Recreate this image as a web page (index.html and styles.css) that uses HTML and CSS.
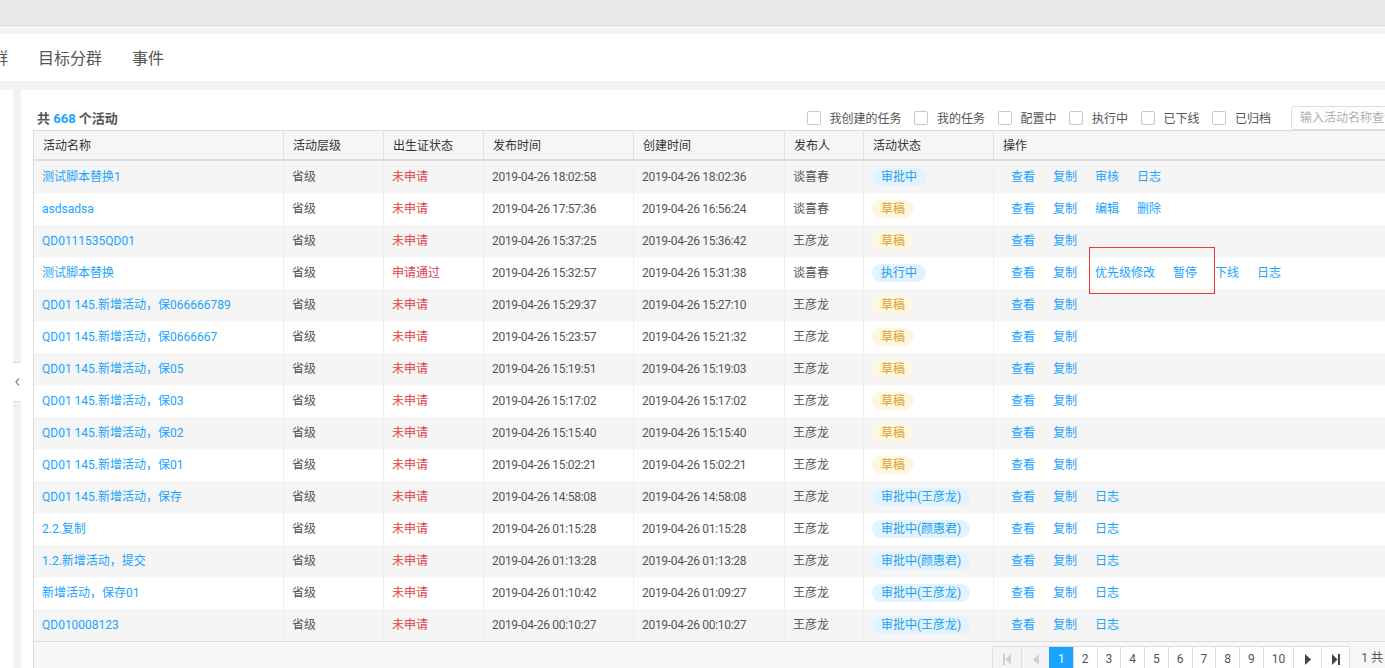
FILE: index.html
```html
<!DOCTYPE html>
<html lang="zh-CN">
<head>
<meta charset="utf-8">
<title>活动列表</title>
<link rel="stylesheet" href="styles.css">
</head>
<body>
<div class="topbar"></div>
<div class="band"></div>
<nav class="nav">
  <span class="nav-item cut">用户分群</span>
  <span class="nav-item">目标分群</span>
  <span class="nav-item">事件</span>
</nav>
<div class="band band-b"></div>
<div class="main">
  <div class="side"></div>
  <div class="rail">
    <div class="rail-top"></div>
    <div class="rail-toggle">
      <svg width="5" height="8" viewBox="0 0 5 8"><polyline points="4,0.5 1,4 4,7.5" fill="none" stroke="#7a8ea8" stroke-width="1.3"/></svg>
    </div>
    <div class="rail-bottom"></div>
  </div>
  <div class="panel">
    <div class="toolbar">
      <div class="title">共 <span class="count">668</span> 个活动</div>
      <div class="filters">
        <label class="check"><span class="box"></span><span class="lbl">我创建的任务</span></label>
        <label class="check"><span class="box"></span><span class="lbl">我的任务</span></label>
        <label class="check"><span class="box"></span><span class="lbl">配置中</span></label>
        <label class="check"><span class="box"></span><span class="lbl">执行中</span></label>
        <label class="check"><span class="box"></span><span class="lbl">已下线</span></label>
        <label class="check"><span class="box"></span><span class="lbl">已归档</span></label>
      </div>
      <input class="search" type="text" placeholder="输入活动名称查询">
    </div>
    <div class="grid">
      <div class="row head">
        <div>活动名称</div><div>活动层级</div><div>出生证状态</div><div>发布时间</div><div>创建时间</div><div>发布人</div><div>活动状态</div><div>操作</div>
      </div>
      <div class="body">
        <div class="row"><div><a>测试脚本替换1</a></div><div>省级</div><div class="red">未申请</div><div class="date">2019-04-26 18:02:58</div><div class="date">2019-04-26 18:02:36</div><div>谈喜春</div><div><span class="tag blue">审批中</span></div><div class="ops"><a>查看</a><a>复制</a><a>审核</a><a>日志</a></div></div>
        <div class="row"><div><a>asdsadsa</a></div><div>省级</div><div class="red">未申请</div><div class="date">2019-04-26 17:57:36</div><div class="date">2019-04-26 16:56:24</div><div>谈喜春</div><div><span class="tag yellow">草稿</span></div><div class="ops"><a>查看</a><a>复制</a><a>编辑</a><a>删除</a></div></div>
        <div class="row"><div><a>QD0111535QD01</a></div><div>省级</div><div class="red">未申请</div><div class="date">2019-04-26 15:37:25</div><div class="date">2019-04-26 15:36:42</div><div>王彦龙</div><div><span class="tag yellow">草稿</span></div><div class="ops"><a>查看</a><a>复制</a></div></div>
        <div class="row"><div><a>测试脚本替换</a></div><div>省级</div><div class="red">申请通过</div><div class="date">2019-04-26 15:32:57</div><div class="date">2019-04-26 15:31:38</div><div>谈喜春</div><div><span class="tag blue">执行中</span></div><div class="ops marked"><a>查看</a><a>复制</a><a>优先级修改</a><a>暂停</a><a>下线</a><a>日志</a><span class="mark"></span></div></div>
        <div class="row"><div><a>QD01 145.新增活动，保066666789</a></div><div>省级</div><div class="red">未申请</div><div class="date">2019-04-26 15:29:37</div><div class="date">2019-04-26 15:27:10</div><div>王彦龙</div><div><span class="tag yellow">草稿</span></div><div class="ops"><a>查看</a><a>复制</a></div></div>
        <div class="row"><div><a>QD01 145.新增活动，保0666667</a></div><div>省级</div><div class="red">未申请</div><div class="date">2019-04-26 15:23:57</div><div class="date">2019-04-26 15:21:32</div><div>王彦龙</div><div><span class="tag yellow">草稿</span></div><div class="ops"><a>查看</a><a>复制</a></div></div>
        <div class="row"><div><a>QD01 145.新增活动，保05</a></div><div>省级</div><div class="red">未申请</div><div class="date">2019-04-26 15:19:51</div><div class="date">2019-04-26 15:19:03</div><div>王彦龙</div><div><span class="tag yellow">草稿</span></div><div class="ops"><a>查看</a><a>复制</a></div></div>
        <div class="row"><div><a>QD01 145.新增活动，保03</a></div><div>省级</div><div class="red">未申请</div><div class="date">2019-04-26 15:17:02</div><div class="date">2019-04-26 15:17:02</div><div>王彦龙</div><div><span class="tag yellow">草稿</span></div><div class="ops"><a>查看</a><a>复制</a></div></div>
        <div class="row"><div><a>QD01 145.新增活动，保02</a></div><div>省级</div><div class="red">未申请</div><div class="date">2019-04-26 15:15:40</div><div class="date">2019-04-26 15:15:40</div><div>王彦龙</div><div><span class="tag yellow">草稿</span></div><div class="ops"><a>查看</a><a>复制</a></div></div>
        <div class="row"><div><a>QD01 145.新增活动，保01</a></div><div>省级</div><div class="red">未申请</div><div class="date">2019-04-26 15:02:21</div><div class="date">2019-04-26 15:02:21</div><div>王彦龙</div><div><span class="tag yellow">草稿</span></div><div class="ops"><a>查看</a><a>复制</a></div></div>
        <div class="row"><div><a>QD01 145.新增活动，保存</a></div><div>省级</div><div class="red">未申请</div><div class="date">2019-04-26 14:58:08</div><div class="date">2019-04-26 14:58:08</div><div>王彦龙</div><div><span class="tag blue">审批中(王彦龙)</span></div><div class="ops"><a>查看</a><a>复制</a><a>日志</a></div></div>
        <div class="row"><div><a>2.2.复制</a></div><div>省级</div><div class="red">未申请</div><div class="date">2019-04-26 01:15:28</div><div class="date">2019-04-26 01:15:28</div><div>王彦龙</div><div><span class="tag blue">审批中(颜惠君)</span></div><div class="ops"><a>查看</a><a>复制</a><a>日志</a></div></div>
        <div class="row"><div><a>1.2.新增活动，提交</a></div><div>省级</div><div class="red">未申请</div><div class="date">2019-04-26 01:13:28</div><div class="date">2019-04-26 01:13:28</div><div>王彦龙</div><div><span class="tag blue">审批中(颜惠君)</span></div><div class="ops"><a>查看</a><a>复制</a><a>日志</a></div></div>
        <div class="row"><div><a>新增活动，保存01</a></div><div>省级</div><div class="red">未申请</div><div class="date">2019-04-26 01:10:42</div><div class="date">2019-04-26 01:09:27</div><div>王彦龙</div><div><span class="tag blue">审批中(王彦龙)</span></div><div class="ops"><a>查看</a><a>复制</a><a>日志</a></div></div>
        <div class="row"><div><a>QD010008123</a></div><div>省级</div><div class="red">未申请</div><div class="date">2019-04-26 00:10:27</div><div class="date">2019-04-26 00:10:27</div><div>王彦龙</div><div><span class="tag blue">审批中(王彦龙)</span></div><div class="ops"><a>查看</a><a>复制</a><a>日志</a></div></div>
      </div>
      <div class="pager-bar">
        <div class="pages">
          <span class="pg icon disabled"><svg width="8" height="11" viewBox="0 0 8 11"><rect x="0" y="0" width="2" height="11"/><polygon points="8,0 8,11 2.5,5.5"/></svg></span>
          <span class="pg icon disabled"><svg width="6" height="11" viewBox="0 0 6 11"><polygon points="6,0 6,11 0,5.5"/></svg></span>
          <span class="pg active">1</span>
          <span class="pg">2</span>
          <span class="pg">3</span>
          <span class="pg">4</span>
          <span class="pg">5</span>
          <span class="pg">6</span>
          <span class="pg">7</span>
          <span class="pg">8</span>
          <span class="pg">9</span>
          <span class="pg">10</span>
          <span class="pg icon"><svg width="6" height="11" viewBox="0 0 6 11"><polygon points="0,0 0,11 6,5.5"/></svg></span>
          <span class="pg icon"><svg width="8" height="11" viewBox="0 0 8 11"><polygon points="0,0 0,11 5.5,5.5"/><rect x="6" y="0" width="2" height="11"/></svg></span>
        </div>
        <span class="pager-info">1 共 45 页</span>
      </div>
    </div>
  </div>
</div>
</body>
</html>
```

FILE: styles.css
```css
* { box-sizing: border-box; }
html, body { margin: 0; padding: 0; }
body {
  width: 1385px;
  height: 668px;
  overflow: hidden;
  background: #fff;
  font-family: Roboto, "Noto Sans CJK SC", sans-serif;
  font-size: 12px;
  color: #555;
}

.topbar { height: 26px; background: #e9e9e9; border-bottom: 1px solid #dadada; }
.band { height: 8px; background: #f3f3f3; }
.band-b { height: 9px; }

.nav {
  height: 47px;
  background: #fff;
  display: flex;
  align-items: center;
  gap: 30px;
  padding-top: 2px;
  font-size: 16px;
  line-height: 20px;
  color: #555;
  white-space: nowrap;
  overflow: hidden;
}
.nav-item { flex: none; }
.nav-item.cut { margin-left: -56px; }

.main { display: flex; height: 578px; }
.side { width: 13px; flex: none; background: #fff; }
.rail { width: 8px; flex: none; display: flex; flex-direction: column; }
.rail-top { height: 273px; background: #f2f2f2; border-bottom: 1px solid #dedede; }
.rail-toggle { height: 38px; background: #fff; display: flex; align-items: center; padding-left: 2px; }
.rail-bottom { flex: 1; background: #f2f2f2; border-top: 1px solid #dedede; }

.panel { flex: none; width: 1436px; padding-left: 12px; background: #fff; }

.toolbar { display: flex; align-items: flex-end; height: 40px; width: 1424px; }
.title { margin-left: 4px; font-size: 13px; font-weight: bold; line-height: 22px; color: #555; }
.count { color: #1aa3ff; }
.filters { margin-left: auto; display: flex; align-items: center; gap: 13px; height: 24px; }
.check { display: flex; align-items: center; gap: 8.5px; color: #555; line-height: 16px; }
.lbl { padding-top: 2px; }
.box { width: 14px; height: 14px; border: 1px solid #c9c9c9; border-radius: 2px; background: #fff; }
.search {
  margin-left: 20px;
  width: 166px;
  height: 24px;
  border: 1px solid #dcdcdc;
  border-radius: 3px;
  padding: 0 8px;
  font-family: inherit;
  font-size: 12px;
  color: #555;
  outline: none;
}
.search::placeholder { color: #b0b0b0; }

.grid { width: 1424px; border-left: 1px solid #ddd; border-top: 1px solid #ddd; }
.row {
  display: grid;
  grid-template-columns: 250px 100px 100px 150px 151px 79px 130px 1fr;
  height: 32px;
}
.row > div {
  border-right: 1px solid #efefef;
  padding: 0 8px;
  display: flex;
  align-items: center;
  white-space: nowrap;
  line-height: 16px;
}
.row.head { height: 30px; background: #f6f6f6; border-bottom: 2px solid #ddd; color: #333; }
.row.head > div { border-right-color: #e0e0e0; padding: 2px 8px 0 9px; }
.body .row:nth-child(odd) { background: #f5f5f5; }

a { color: #1aa3ff; text-decoration: none; cursor: pointer; }
.red { color: #e2434a; }
.date { letter-spacing: -0.3px; }

.tag { height: 18px; line-height: 18px; padding: 0 9px; border-radius: 9px; }
.tag.blue { background: #e2f3fe; color: #1d9ded; }
.tag.yellow { background: #fff6e2; color: #e0a02a; }

.ops a { margin: 0 9px; }
.ops.marked { position: relative; overflow: visible; }
.mark {
  position: absolute;
  left: 95px;
  top: -10px;
  width: 126px;
  height: 47px;
  border: 1px solid #e8383d;
}

.pager-bar {
  display: flex;
  align-items: flex-start;
  height: 40px;
  background: #f7f7f7;
  border-top: 1px solid #ddd;
  padding: 4px 0 0 958px;
}
.pages {
  display: flex;
  height: 26px;
  border: 1px solid #ddd;
  border-radius: 3px 0 0 3px;
  background: #fff;
  overflow: hidden;
}
.pg {
  display: flex;
  align-items: center;
  justify-content: center;
  padding: 0 8px;
  border-left: 1px solid #ddd;
  color: #555;
}
.pg:first-child { border-left: 0; }
.pg.icon { width: 28px; padding: 0; fill: #444; }
.pg.icon.disabled { background: #f4f4f4; fill: #cfcfcf; }
.pg.active { background: #1aa3ff; color: #fff; border-left-color: #1aa3ff; }
.pager-info { margin-left: 11px; line-height: 24px; color: #555; white-space: nowrap; }
```
